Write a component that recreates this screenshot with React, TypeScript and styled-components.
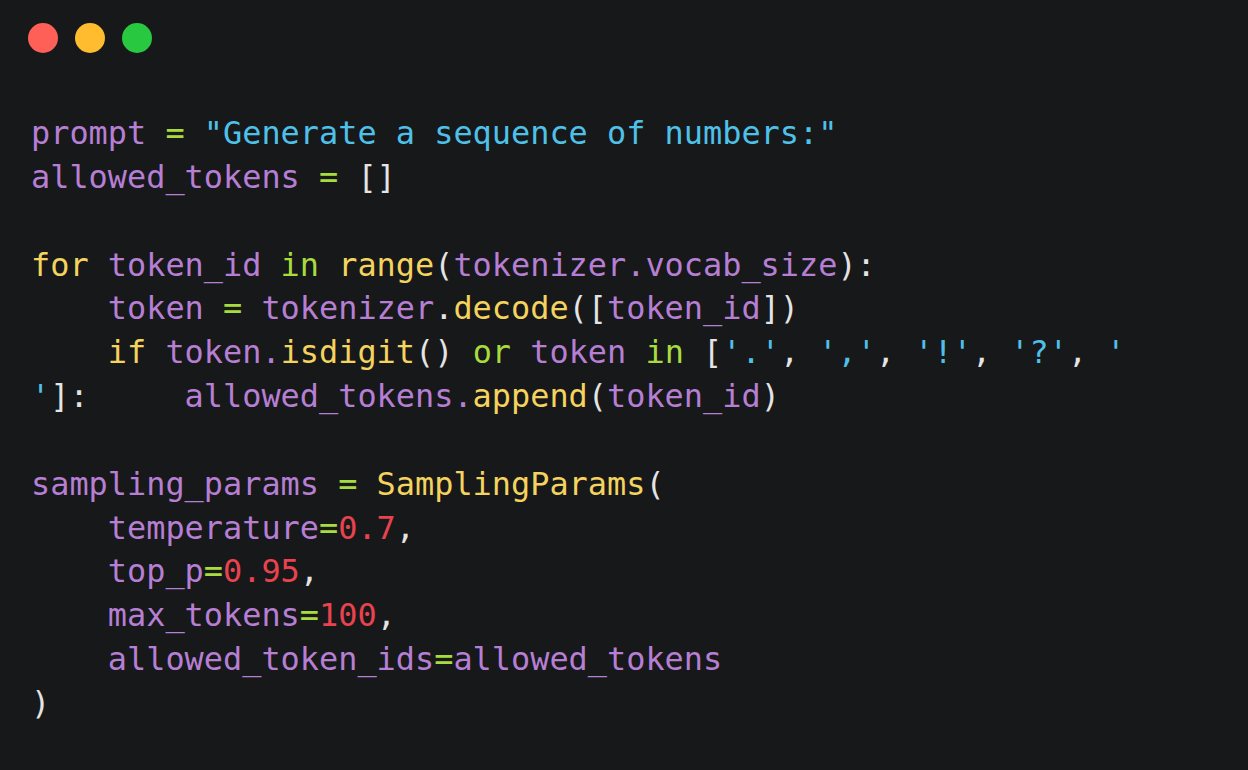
import React from "react";
import styled, { createGlobalStyle } from "styled-components";

const Global = createGlobalStyle`
  html, body {
    margin: 0;
    padding: 0;
    background: #17181a;
  }
  #root { min-height: 100vh; }
`;

const Window = styled.div`
  width: 1248px;
  height: 770px;
  box-sizing: border-box;
  background: #17181a;
  padding: 23px 28px 0 28px;
  display: flex;
  flex-direction: column;
  overflow: hidden;
`;

const Lights = styled.div`
  display: flex;
  gap: 17px;
  height: 30px;
`;

const Light = styled.span<{ $c: string }>`
  width: 30px;
  height: 30px;
  border-radius: 50%;
  background: ${(p) => p.$c};
`;

const Code = styled.pre`
  margin: 59px 0 0 3px;
  font-family: "DejaVu Sans Mono", "Liberation Mono", monospace;
  font-size: 31.9px;
  line-height: 43.85px;
  color: #e4e4e4;
  white-space: pre;
`;

const Line = styled.div`
  height: 43.85px;
`;

const T = styled.span<{ $k: "v" | "o" | "s" | "y" | "n" | "p" }>`
  color: ${(p) =>
    ({
      v: "#b67fd4",
      o: "#a8dc3e",
      s: "#4fc1e9",
      y: "#f4d35e",
      n: "#e8434e",
      p: "#e4e4e4",
    }[p.$k])};
`;

type Tok = [string, "v" | "o" | "s" | "y" | "n" | "p"];

const lines: Tok[][] = [
  [["prompt ", "v"], ["=", "o"], [" ", "p"], ['"Generate a sequence of numbers:"', "s"]],
  [["allowed_tokens ", "v"], ["=", "o"], [" []", "p"]],
  [],
  [
    ["for", "y"], [" token_id ", "v"], ["in", "o"], [" ", "p"], ["range", "y"],
    ["(", "p"], ["tokenizer.vocab_size", "v"], ["):", "p"],
  ],
  [
    ["    token ", "v"], ["=", "o"], [" tokenizer", "v"], [".", "p"], ["decode", "y"],
    ["([", "p"], ["token_id", "v"], ["])", "p"],
  ],
  [
    ["    ", "p"], ["if", "y"], [" token.", "v"], ["isdigit", "y"], ["() ", "p"],
    ["or", "o"], [" token ", "v"], ["in", "o"], [" [", "p"],
    ["'.'", "s"], [", ", "p"], ["','", "s"], [", ", "p"], ["'!'", "s"], [", ", "p"],
    ["'?'", "s"], [", ", "p"], ["'", "s"],
  ],
  [
    ["'", "s"], ["]:     ", "p"], ["allowed_tokens.", "v"], ["append", "y"],
    ["(", "p"], ["token_id", "v"], [")", "p"],
  ],
  [],
  [["sampling_params ", "v"], ["=", "o"], [" ", "p"], ["SamplingParams", "y"], ["(", "p"]],
  [["    temperature", "v"], ["=", "o"], ["0.7", "n"], [",", "p"]],
  [["    top_p", "v"], ["=", "o"], ["0.95", "n"], [",", "p"]],
  [["    max_tokens", "v"], ["=", "o"], ["100", "n"], [",", "p"]],
  [["    allowed_token_ids", "v"], ["=", "o"], ["allowed_tokens", "v"]],
  [[")", "p"]],
];

export default function App() {
  return (
    <>
      <Global />
      <Window>
        <Lights>
          <Light $c="#fe5f57" />
          <Light $c="#febc2e" />
          <Light $c="#28c840" />
        </Lights>
        <Code>
          {lines.map((l, i) => (
            <Line key={i}>
              {l.map(([text, k], j) => (
                <T key={j} $k={k}>
                  {text}
                </T>
              ))}
            </Line>
          ))}
        </Code>
      </Window>
    </>
  );
}
